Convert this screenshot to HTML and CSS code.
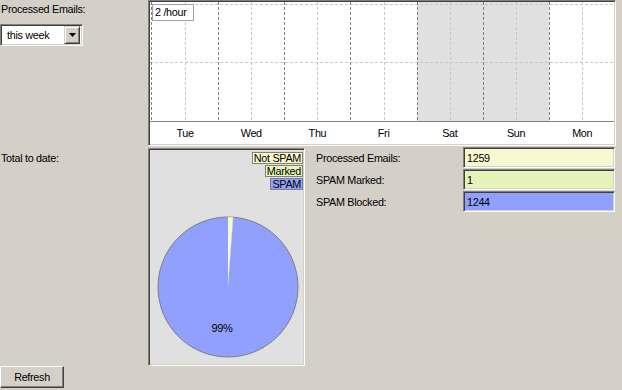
FILE: index.html
```html
<!DOCTYPE html>
<html>
<head>
<meta charset="utf-8">
<link rel="stylesheet" href="styles.css">
</head>
<body>
<div class="app">
  <div class="row1">
    <div class="left">
      <div class="lbl">Processed Emails:</div>
      <div class="select">
        <span class="select-text">this week</span>
        <span class="select-btn"><svg width="7" height="4" viewBox="0 0 7 4"><path d="M0 0H7L3.5 4Z" fill="#000"/></svg></span>
      </div>
    </div>
    <div class="chart sunken">
      <div class="plot">
        <svg class="plot-svg" width="464" height="120" viewBox="0 0 464 120">
          <rect x="267" y="0" width="132" height="119" fill="#e0e0e0"/>
          <g stroke="#c8c8c8" stroke-width="1" stroke-dasharray="3 2">
            <line x1="0" y1="2.5" x2="464" y2="2.5"/>
            <line x1="0" y1="60.5" x2="464" y2="60.5"/>
            <line x1="35.5" y1="0" x2="35.5" y2="119"/>
            <line x1="101.5" y1="0" x2="101.5" y2="119"/>
            <line x1="167.5" y1="0" x2="167.5" y2="119"/>
            <line x1="234.5" y1="0" x2="234.5" y2="119"/>
            <line x1="300.5" y1="0" x2="300.5" y2="119"/>
            <line x1="366.5" y1="0" x2="366.5" y2="119"/>
            <line x1="432.5" y1="0" x2="432.5" y2="119"/>
          </g>
          <g stroke="#808080" stroke-width="1" stroke-dasharray="3 2">
            <line x1="1.5" y1="0" x2="1.5" y2="119"/>
            <line x1="68.5" y1="0" x2="68.5" y2="119"/>
            <line x1="134.5" y1="0" x2="134.5" y2="119"/>
            <line x1="200.5" y1="0" x2="200.5" y2="119"/>
            <line x1="267.5" y1="0" x2="267.5" y2="119"/>
            <line x1="333.5" y1="0" x2="333.5" y2="119"/>
            <line x1="399.5" y1="0" x2="399.5" y2="119"/>
          </g>
          <line x1="0" y1="119.5" x2="464" y2="119.5" stroke="#808080"/>
        </svg>
        <div class="rate">2 /hour</div>
      </div>
      <div class="days">
        <span>Tue</span><span>Wed</span><span>Thu</span><span>Fri</span><span>Sat</span><span>Sun</span><span>Mon</span>
      </div>
    </div>
  </div>
  <div class="row2">
    <div class="lbl total">Total to date:</div>
    <div class="pie-panel sunken">
      <svg class="pie-svg" width="153" height="214" viewBox="0 0 153 214">
        <circle cx="78" cy="137" r="70" fill="#90a0fc" stroke="#808080" stroke-width="1"/>
        <path d="M78 137 L78 67 A70 70 0 0 1 82.9 67.2 Z" fill="#f8f8c8"/>
        <path d="M78 137 L82.9 67.2 A70 70 0 0 1 83.3 67.2 Z" fill="#e4f4b8"/>
        <text x="72" y="182" class="pct" text-anchor="middle">99%</text>
      </svg>
      <div class="legend">
        <span class="leg leg-not">Not SPAM</span>
        <span class="leg leg-marked">Marked</span>
        <span class="leg leg-spam">SPAM</span>
      </div>
    </div>
    <div class="stats">
      <div class="stat-lbl">Processed Emails:</div>
      <div class="field f-yellow">1259</div>
      <div class="stat-lbl">SPAM Marked:</div>
      <div class="field f-green">1</div>
      <div class="stat-lbl">SPAM Blocked:</div>
      <div class="field f-blue">1244</div>
    </div>
  </div>
  <div class="bottom">
    <button class="btn">Refresh</button>
  </div>
</div>
</body>
</html>
```

FILE: styles.css
```css
html, body {
  margin: 0;
  padding: 0;
  background: #d4d0c8;
}
body {
  font-family: "Liberation Sans", Arial, sans-serif;
  font-size: 10.8px;
  letter-spacing: -0.3px;
  color: #000;
  width: 622px;
  height: 390px;
  overflow: hidden;
}
.app {
  display: flex;
  flex-direction: column;
}
.row1 {
  display: grid;
  grid-template-columns: 148px 468px;
  height: 146px;
}
.lbl {
  line-height: 13px;
  padding-top: 3px;
  padding-left: 1px;
}
.select {
  margin-top: 8px;
  width: 83px;
  height: 22px;
  box-sizing: border-box;
  background: #fff;
  border-top: 1px solid #808080;
  border-left: 1px solid #808080;
  border-right: 1px solid #fff;
  border-bottom: 1px solid #fff;
  box-shadow: inset 1px 1px 0 #404040, inset -1px -1px 0 #d4d0c8;
  display: flex;
  align-items: center;
  justify-content: space-between;
  padding: 2px;
}
.select-text {
  padding-left: 4px;
  line-height: 13px;
}
.select-btn {
  width: 16px;
  height: 18px;
  box-sizing: border-box;
  background: #d4d0c8;
  border-top: 1px solid #d4d0c8;
  border-left: 1px solid #d4d0c8;
  border-right: 1px solid #404040;
  border-bottom: 1px solid #404040;
  box-shadow: inset 1px 1px 0 #fff, inset -1px -1px 0 #808080;
  display: flex;
  align-items: center;
  justify-content: center;
}
.select-btn svg { display: block; }

.sunken {
  box-sizing: border-box;
  border-top: 1px solid #808080;
  border-left: 1px solid #808080;
  border-right: 1px solid #fff;
  border-bottom: 1px solid #fff;
  box-shadow: inset 1px 1px 0 #404040, inset -1px -1px 0 #d4d0c8;
  padding: 1px;
}
.chart {
  background: #fff;
  display: flex;
  flex-direction: column;
}
.plot {
  position: relative;
  height: 120px;
}
.plot-svg { display: block; }
.rate {
  position: absolute;
  left: 2px;
  top: 2px;
  width: 42px;
  height: 17px;
  box-sizing: border-box;
  border: 1px solid #a0a0a0;
  background: #fff;
  line-height: 15px;
  padding-left: 2px;
  white-space: nowrap;
}
.days {
  display: grid;
  grid-template-columns: repeat(7, 66.2px);
  padding-left: 2px;
  height: 22px;
  align-items: center;
}
.days span {
  text-align: center;
  line-height: 13px;
  padding-top: 1px;
}

.row2 {
  margin-top: 2px;
  display: grid;
  grid-template-columns: 148px 157px 317px;
  height: 218px;
}
.total {
  padding-top: 4px;
}
.pie-panel {
  background: #e0e0e0;
  position: relative;
  height: 218px;
}
.pie-svg { display: block; }
.pct {
  font-family: "Liberation Sans", Arial, sans-serif;
  font-size: 11px;
  fill: #000;
}
.legend {
  position: absolute;
  top: 3px;
  right: 1px;
  display: flex;
  flex-direction: column;
  align-items: flex-end;
  gap: 1px;
}
.leg {
  border: 1px solid #808080;
  line-height: 10px;
  height: 12px;
  box-sizing: border-box;
  padding: 0 1px;
  white-space: nowrap;
}
.leg-not { background: #f8f8c8; }
.leg-marked { background: #e8f4b8; }
.leg-spam { background: #90a0fc; }

.stats {
  display: grid;
  grid-template-columns: 147px 152px;
  grid-auto-rows: 21px;
  row-gap: 1px;
  padding-left: 11px;
  margin-top: -1px;
  align-items: center;
}
.stat-lbl {
  line-height: 13px;
  padding-top: 1px;
}
.field {
  height: 21px;
  box-sizing: border-box;
  border-top: 1px solid #808080;
  border-left: 1px solid #808080;
  border-right: 1px solid #fff;
  border-bottom: 1px solid #fff;
  box-shadow: inset 1px 1px 0 #404040, inset -1px -1px 0 #d4d0c8;
  padding: 3px 3px 0 3px;
  line-height: 14px;
}
.f-yellow { background: #f8f8d0; }
.f-green { background: #e4f4b8; }
.f-blue { background: #90a0fc; }

.bottom {
  display: flex;
}
.btn {
  font-family: "Liberation Sans", Arial, sans-serif;
  font-size: 10.8px;
  letter-spacing: -0.3px;
  color: #000;
  width: 64px;
  height: 22px;
  box-sizing: border-box;
  margin: 0;
  padding: 0;
  background: #d4d0c8;
  border-top: 1px solid #fff;
  border-left: 1px solid #fff;
  border-right: 1px solid #404040;
  border-bottom: 1px solid #404040;
  box-shadow: inset -1px -1px 0 #808080;
  border-radius: 0;
}
```
